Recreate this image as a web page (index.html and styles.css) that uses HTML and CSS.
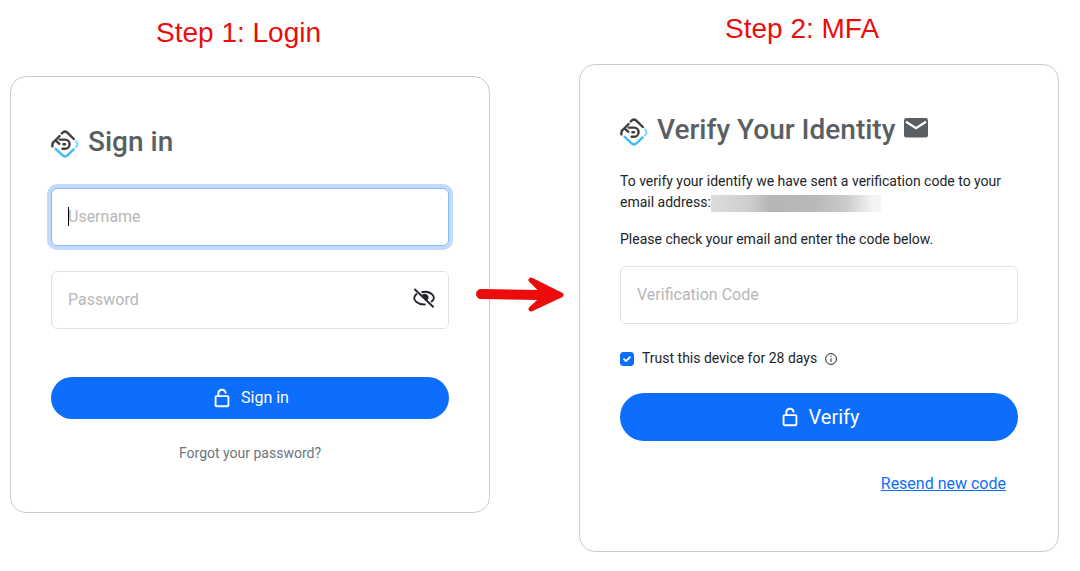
FILE: index.html
```html
<!DOCTYPE html>
<html lang="en">
<head>
    <meta charset="UTF-8">
    <meta name="viewport" content="width=device-width, initial-scale=1.0">
    <title>Sign in with MFA</title>
    <link rel="stylesheet" href="styles.css">
</head>
<body>
    <!-- shared icons -->
    <svg class="sprite" aria-hidden="true">
        <symbol id="logo" viewBox="0 0 28 28">
            <g fill="none" stroke-width="2.4" stroke-linecap="round" stroke-linejoin="round">
                <path stroke="#3d3d3f" d="M10.8 3.4 12.2 2.2Q14 .8 15.8 2.2L22.8 9M1.4 16.4V14.4Q1.4 13 2.6 12L8.6 6"/>
                <path stroke="#3d3d3f" d="M5 10.8 8.4 13.8M8.6 9.6H14A4.5 4.5 0 0 1 14 18.8H11.6M12.4 14.2H14"/>
                <path stroke="#3ebcf3" d="M4.6 18.8 11.4 25.2Q14 27.6 16.6 25.2L22.6 19.4"/>
                <path stroke="#8bdcfc" d="M25 11.4Q28 14 25 17.2"/>
            </g>
        </symbol>
        <symbol id="lock" viewBox="0 0 24 24">
            <path fill="currentColor" d="M12 4c1.654 0 3 1.346 3 3h2c0-2.757-2.243-5-5-5S7 4.243 7 7v2H6c-1.103 0-2 .897-2 2v9c0 1.103.897 2 2 2h12c1.103 0 2-.897 2-2v-9c0-1.103-.897-2-2-2H9V7c0-1.654 1.346-3 3-3zm6.002 16H6v-9h12l.002 9z"/>
        </symbol>
    </svg>

    <main class="steps">
        <section class="step step-login">
            <h2 class="step-label">Step 1: Login</h2>
            <form class="card" onsubmit="return false;">
                <h1 class="card-title">
                    <svg class="logo" aria-hidden="true"><use href="#logo"/></svg>
                    Sign in
                </h1>
                <div class="field">
                    <input class="input input-active" id="username" type="text" placeholder="Username" aria-label="Username">
                    <span class="caret"></span>
                </div>
                <div class="field">
                    <input class="input" id="password" type="password" placeholder="Password" aria-label="Password">
                    <button class="toggle" type="button" aria-label="Show password">
                        <svg viewBox="0 0 24 24" width="24" height="24" fill="none" stroke="currentColor" stroke-width="1.9">
                            <path d="M5 7.4C1.4 10.4 1.3 13.4 4.4 15.9 6.8 17.8 9.8 18.7 13.6 18.4M9.4 6.2C13.8 5.2 17.8 6 20.4 8.6 22.8 11.2 22.4 13.8 19 16"/>
                            <path d="M2.4 3 21.6 21.2"/>
                            <path fill="currentColor" stroke="none" d="M9.8 9A3.9 3.9 0 0 1 16 13.6L14.8 14.6Z"/>
                        </svg>
                    </button>
                </div>
                <button class="btn btn-signin" type="submit">
                    <svg class="lock" aria-hidden="true"><use href="#lock"/></svg>
                    Sign in
                </button>
                <a class="forgot" href="#">Forgot your password?</a>
            </form>
        </section>

        <section class="step step-mfa">
            <h2 class="step-label">Step 2: MFA</h2>
            <form class="card" onsubmit="return false;">
                <h1 class="card-title">
                    <svg class="logo" aria-hidden="true"><use href="#logo"/></svg>
                    Verify Your Identity
                    <svg class="mail" viewBox="0 0 24 20" aria-hidden="true">
                        <path fill="currentColor" d="M2.4 0H21.6A2.4 2.4 0 0 1 24 2.4V17.2A2.4 2.4 0 0 1 21.6 19.6H2.4A2.4 2.4 0 0 1 0 17.2V2.4A2.4 2.4 0 0 1 2.4 0Z"/>
                        <path fill="none" stroke="#fff" stroke-width="2.4" d="M2 3.8 12 10.2 22 3.8"/>
                    </svg>
                </h1>
                <p class="text">To verify your identify we have sent a verification code to your email address:<span class="redacted"></span></p>
                <p class="text">Please check your email and enter the code below.</p>
                <input class="input" id="code" type="text" placeholder="Verification Code" aria-label="Verification Code">
                <div class="trust">
                    <input class="check" id="trust" type="checkbox" checked>
                    <label for="trust">Trust this device for 28 days</label>
                    <svg class="info" viewBox="0 0 12 12" fill="none" stroke="currentColor" aria-hidden="true">
                        <circle cx="6" cy="6" r="5.4"/>
                        <path d="M6 5.2V9M6 2.8V4"/>
                    </svg>
                </div>
                <button class="btn btn-verify" type="submit">
                    <svg class="lock" aria-hidden="true"><use href="#lock"/></svg>
                    Verify
                </button>
                <a class="resend" href="#">Resend new code</a>
            </form>
        </section>

        <svg class="arrow" viewBox="0 0 88 36" fill="none" stroke-linecap="round" stroke-linejoin="round" aria-hidden="true">
            <path stroke="#ec0c0c" stroke-width="10" d="M5 17 62 18"/>
            <path fill="#ec0c0c" stroke="#ec0c0c" stroke-width="5" d="M55 3 85 18 55 32 70 18Z"/>
        </svg>
    </main>
</body>
</html>
```

FILE: styles.css
```css
:root {
    --blue: #0d6efd;
    --red: #ec0c0c;
    --title: #5a5f63;
    --text: #212529;
    --border: #dee2e6;
}
* { box-sizing: border-box; margin: 0; padding: 0; }
body {
    font-family: Roboto, "Liberation Sans", sans-serif;
    font-size: 14px;
    line-height: 21px;
    color: var(--text);
    background: #fff;
}
.sprite { position: absolute; width: 0; height: 0; }
.steps {
    position: relative; display: flex; align-items: flex-start;
    gap: 89px; padding: 13px 21px 12px 10px;
}
.step { flex: 1; }
.step-login { padding-top: 4px; }
.step-label {
    font-family: "Liberation Sans", Arial, sans-serif; font-size: 28px; font-weight: 400;
    line-height: 32px; color: var(--red); padding-left: 146px;
}
.card {
    display: flex; flex-direction: column; padding: 40px;
    border: 1px solid #ccc; border-radius: 16px;
}
.step-login .card { margin-top: 27px; }
.step-mfa .card { margin-top: 19px; }
.card-title {
    display: flex; align-items: center; gap: 9px;
    font-size: 28px; font-weight: 500; line-height: 34px; color: var(--title);
}
.step-login .card-title { margin: 8px 0 29px; }
.step-mfa .card-title { margin: 8px 0 24px; }
.logo { width: 28px; height: 28px; margin-top: 4px; }
.mail { width: 24px; height: 20px; margin-bottom: 4px; }

.field { position: relative; margin-bottom: 25px; }
.input {
    display: block; width: 100%; height: 58px; padding: 15px 16px 17px;
    font: 400 16px/24px Roboto, sans-serif; color: var(--text);
    border: 1px solid var(--border); border-radius: 6px; outline: none;
}
.input::placeholder { color: #b7b7b7; opacity: 1; }
.input-active, .input:focus { border-color: #86b7fe; box-shadow: 0 0 0 4px #c2dafe; }
.caret { position: absolute; left: 17px; top: 19px; width: 1px; height: 19px; background: #000; }
.toggle {
    position: absolute; right: 13px; top: 15px; width: 24px; height: 24px;
    background: none; border: none; color: var(--text); cursor: pointer;
}

.btn {
    display: flex; align-items: center; justify-content: center; gap: 8px;
    width: 100%; border: none; border-radius: 24px;
    background: var(--blue); color: #fff; font-family: inherit; font-weight: 400; cursor: pointer;
}
.btn-signin { height: 42px; margin-top: 23px; padding-bottom: 1px; font-size: 16px; }
.btn-verify { height: 48px; margin-top: 24px; font-size: 20px; }
.lock { width: 22px; height: 22px; }

.forgot { align-self: center; margin: 24px 0 8px; color: #6c757d; text-decoration: none; }
.text { margin-bottom: 16px; }
.redacted {
    display: inline-block; width: 170px; height: 17px; vertical-align: middle;
    background: linear-gradient(90deg, #dcdcdd, #cfcfd1 22%, #b6b6b9 34%, #b9b9bc 62%, #cbcbcd 80%, #f4f4f6 95%);
}
.trust { display: flex; align-items: center; gap: 8px; margin-top: 24px; }
.check {
    appearance: none; width: 14px; height: 14px; border-radius: 3px;
    border: 1px solid var(--blue); background: #fff;
}
.check:checked {
    background: var(--blue) url("data:image/svg+xml,%3Csvg xmlns='http://www.w3.org/2000/svg' viewBox='0 0 12 12'%3E%3Cpath fill='none' stroke='%23fff' stroke-width='1.8' stroke-linecap='round' stroke-linejoin='round' d='M3 6.2 5 8.2 9 4.2'/%3E%3C/svg%3E") center / 12px;
}
.info { width: 12px; height: 12px; }
.resend { align-self: flex-end; margin: 31px 12px 15px; font-size: 16px; line-height: 24px; color: var(--blue); }

.arrow { position: absolute; left: 476px; top: 277px; width: 88px; height: 36px; }
```
